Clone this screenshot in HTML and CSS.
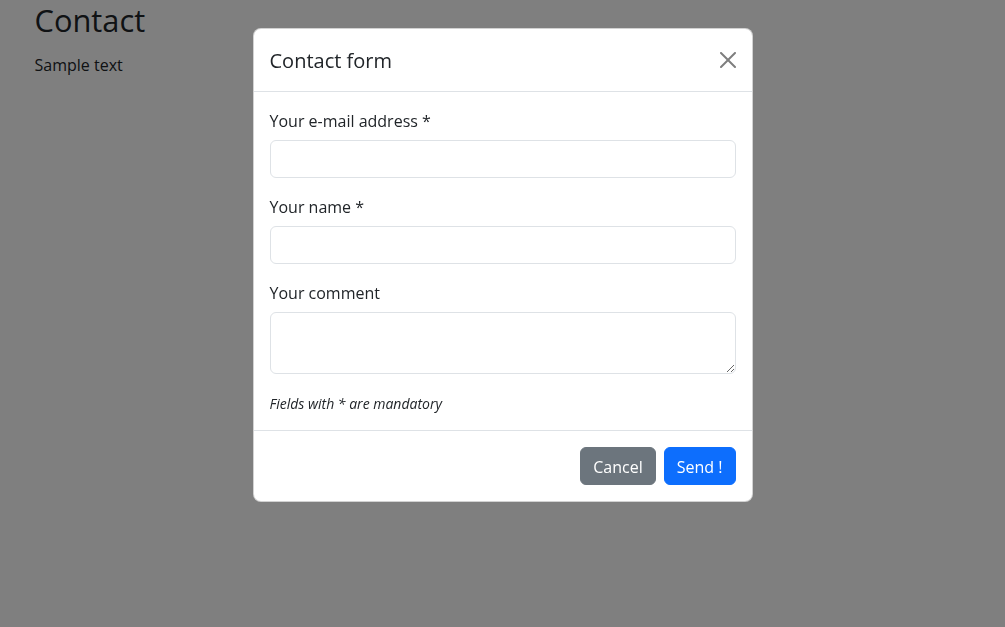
FILE: index.html
```html
<!DOCTYPE html>
<html lang="en">
<head>
<meta charset="utf-8">
<title>Contact</title>
<link rel="stylesheet" href="styles.css">
</head>
<body>
<div class="container">
  <h1 class="page-title">Contact</h1>
  <p class="page-text">Sample text</p>
</div>

<div class="backdrop"></div>

<div class="modal">
  <div class="modal-dialog">
    <div class="modal-header">
      <h5 class="modal-title">Contact form</h5>
      <button class="btn-close" type="button" aria-label="Close">
        <svg viewBox="0 0 16 16" width="16" height="16"><path fill="#000" d="M.293.293a1 1 0 0 1 1.414 0L8 6.586 14.293.293a1 1 0 1 1 1.414 1.414L9.414 8l6.293 6.293a1 1 0 0 1-1.414 1.414L8 9.414l-6.293 6.293a1 1 0 0 1-1.414-1.414L6.586 8 .293 1.707a1 1 0 0 1 0-1.414z"/></svg>
      </button>
    </div>
    <div class="modal-body">
      <div class="field">
        <label class="form-label" for="email">Your e-mail address *</label>
        <input class="form-control" id="email" type="email">
      </div>
      <div class="field">
        <label class="form-label" for="name">Your name *</label>
        <input class="form-control" id="name" type="text">
      </div>
      <div class="field">
        <label class="form-label" for="comment">Your comment</label>
        <textarea class="form-control textarea" id="comment" rows="2"></textarea>
      </div>
      <div class="note"><i>Fields with * are mandatory</i></div>
    </div>
    <div class="modal-footer">
      <button class="btn btn-secondary" type="button">Cancel</button>
      <button class="btn btn-primary" type="button">Send !</button>
    </div>
  </div>
</div>
</body>
</html>
```

FILE: styles.css
```css
* { box-sizing: border-box; }

html, body {
  margin: 0;
  padding: 0;
  height: 100%;
}

body {
  font-family: "Open Sans", "Noto Sans", sans-serif;
  font-size: 16px;
  line-height: 1.5;
  color: #212529;
  background: #fff;
  overflow: hidden;
}

.container {
  max-width: 960px;
  margin: 0 auto;
  padding: 0 12px;
}

.page-title {
  margin: 0 0 15px;
  padding-top: 2px;
  font-size: 30.8px;
  font-weight: 400;
  line-height: 36px;
}

.page-text {
  margin: 0 0 16px;
}

.backdrop {
  position: fixed;
  inset: 0;
  background: #000;
  opacity: 0.5;
}

.modal {
  position: fixed;
  inset: 0;
  display: flex;
  justify-content: center;
  align-items: flex-start;
  padding-top: 28px;
}

.modal-dialog {
  width: 500px;
  background: #fff;
  border: 1px solid rgba(0, 0, 0, 0.175);
  border-radius: 8px;
  display: flex;
  flex-direction: column;
}

.modal-header {
  display: flex;
  align-items: center;
  padding: 17px 16px 15px;
  border-bottom: 1px solid #dee2e6;
}

.modal-title {
  margin: 0;
  font-size: 20px;
  font-weight: 400;
  line-height: 30px;
}

.btn-close {
  margin: -9px -8px -7px auto;
  width: 32px;
  height: 32px;
  padding: 8px;
  border: 0;
  background: transparent;
  opacity: 0.5;
  display: flex;
  align-items: center;
  justify-content: center;
}

.btn-close svg { display: block; }

.modal-body {
  padding: 16px;
}

.field {
  margin-bottom: 16px;
}

.form-label {
  display: inline-block;
  padding-top: 1px;
  margin-bottom: 7px;
}

.form-control {
  display: block;
  width: 100%;
  height: 38px;
  padding: 6px 12px;
  font-family: inherit;
  font-size: 16px;
  line-height: 1.5;
  color: #212529;
  background: #fff;
  border: 1px solid #dee2e6;
  border-radius: 6px;
}

.textarea {
  height: 62px;
  resize: vertical;
}

.note {
  padding-top: 4px;
  font-size: 14px;
  line-height: 20px;
}

.modal-footer {
  display: flex;
  justify-content: flex-end;
  align-items: center;
  padding: 12px;
  border-top: 1px solid #dee2e6;
}

.btn {
  margin: 4px;
  padding: 7px 12px 5px;
  font-family: inherit;
  font-size: 16px;
  line-height: 24px;
  border: 1px solid transparent;
  border-radius: 6px;
  color: #fff;
}

.btn-secondary {
  background: #6c757d;
  border-color: #6c757d;
}

.btn-primary {
  background: #0d6efd;
  border-color: #0d6efd;
}
```
